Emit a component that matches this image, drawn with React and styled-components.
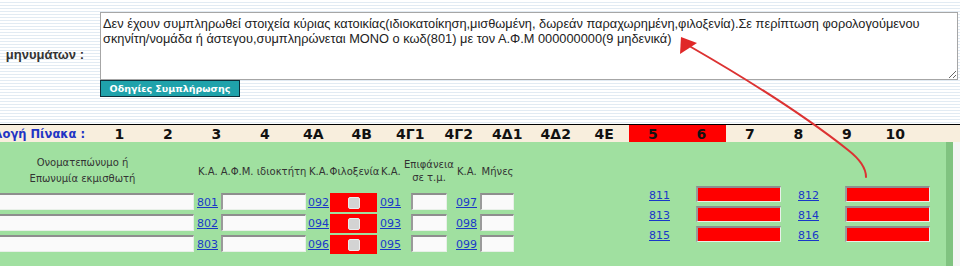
import React from 'react';
import styled, { createGlobalStyle } from 'styled-components';

const GlobalStyle = createGlobalStyle`
  html, body {
    margin: 0;
    padding: 0;
    overflow: hidden;
  }
  body {
    background: repeating-linear-gradient(
      to bottom,
      #ffffff 0px,
      #ffffff 2px,
      #e2ebf3 2px,
      #e2ebf3 3px
    );
    font-family: "Liberation Sans", Arial, sans-serif;
  }
`;

const Page = styled.div`
  position: relative;
  width: 960px;
  height: 266px;
  overflow: hidden;
`;

const MessageRow = styled.div`
  display: flex;
  align-items: center;
  padding-top: 12px;
`;

const FieldLabel = styled.div`
  width: 100px;
  box-sizing: border-box;
  padding-right: 16px;
  text-align: right;
  font: bold 13px "Liberation Sans", Arial, sans-serif;
  color: #333;
`;

const MessageBox = styled.div`
  display: flex;
  flex-direction: column;
  align-items: flex-start;
`;

const MessageArea = styled.textarea`
  width: 858px;
  height: 68px;
  box-sizing: border-box;
  margin: 0;
  padding: 3px 2px 2px;
  border: 1px solid #a6a6a6;
  background: #fff;
  color: #222;
  font: 12.8px/15px "Liberation Sans", Arial, sans-serif;
  resize: both;
  outline: none;
`;

const HelpButton = styled.button`
  width: 140px;
  height: 17px;
  margin: 0;
  padding: 0;
  box-sizing: border-box;
  background: #1fa2ab;
  border: 1px solid #0d2f3a;
  color: #fff;
  font: bold 9.5px "DejaVu Sans", Verdana, sans-serif;
  line-height: 14px;
  text-align: center;
`;

const TabBar = styled.div`
  display: grid;
  grid-template-columns: 95px repeat(17, 48.5px);
  height: 17px;
  margin-top: 27px;
  border-top: 1px solid #000;
  background: #f8eedd;
`;

const TabLabel = styled.div`
  display: flex;
  justify-content: flex-end;
  align-items: center;
  overflow: hidden;
  padding-right: 10px;

  span {
    flex-shrink: 0;
    white-space: nowrap;
    font: bold 11.5px "DejaVu Sans", Verdana, sans-serif;
    color: #1f34c4;
  }
`;

const Tab = styled.div`
  display: flex;
  justify-content: center;
  align-items: center;
  background: ${(p) => (p.$active ? '#ff0000' : 'transparent')};
  font: bold 14px "DejaVu Sans", Verdana, sans-serif;
  color: #111;
`;

const PanelWrap = styled.div`
  display: flex;
  background: #f5f5f5;
  height: 124px;
`;

const Panel = styled.div`
  display: flex;
  align-items: flex-start;
  width: 946px;
  border-right: 7px solid #80c380;
  background: #a0e0a0;
  padding-top: 7px;
  box-sizing: content-box;
`;

const LeaseGrid = styled.div`
  display: grid;
  grid-template-columns: 227px 24px 87px 23px 49px 24px 52px 25px 35px;
  grid-template-rows: 44px repeat(3, 21px);
  margin-left: -31px;
`;

const HeadCell = styled.div`
  display: flex;
  align-items: center;
  justify-content: ${(p) => (p.$left ? 'flex-start' : 'center')};
  padding-left: ${(p) => (p.$left ? '2px' : '0')};
  text-align: center;
  font: 10px/${(p) => p.$lh || 13}px "DejaVu Sans", Tahoma, sans-serif;
  color: #333;
  white-space: nowrap;
`;

const CodeLink = styled.a`
  align-self: center;
  justify-self: start;
  padding-left: 1px;
  margin-top: -2px;
  font: 11px "DejaVu Sans", Verdana, sans-serif;
  color: #1a38c8;
  text-decoration: underline;
  cursor: pointer;
`;

const Field = styled.input`
  box-sizing: border-box;
  width: ${(p) => p.$w}px;
  height: ${(p) => p.$h || 17}px;
  margin: 0 0 0 ${(p) => p.$ml || 0}px;
  padding: 0 2px;
  justify-self: start;
  border-top: 2px solid #8e8e8e;
  border-left: 2px solid #9a9a9a;
  border-bottom: 1px solid #e8f0e8;
  border-right: 1px solid #e8f0e8;
  background: ${(p) => (p.$alert ? '#ff0000' : '#fafafa')};
  font: 11px "Liberation Sans", Arial, sans-serif;
  outline: none;
`;

const FlagCell = styled.div`
  display: flex;
  justify-content: center;
  align-items: center;
  width: 47px;
  height: 19px;
  background: #ff0000;
  justify-self: start;
`;

const Flag = styled.input`
  appearance: none;
  width: 12px;
  height: 12px;
  margin: 0;
  border: 1px solid #ececec;
  border-radius: 2px;
  background: #d3d3d3;
`;

const ExtraGrid = styled.div`
  display: grid;
  grid-template-columns: 33px 86px 33px 86px;
  column-gap: 15px;
  grid-auto-rows: 20px;
  margin-left: auto;
  margin-right: 15px;
  margin-top: 37px;
  align-items: start;
`;

const Arrow = styled.svg`
  position: absolute;
  left: 0;
  top: 0;
  pointer-events: none;
`;

const tabs = ['1', '2', '3', '4', '4Α', '4Β', '4Γ1', '4Γ2', '4Δ1', '4Δ2', '4Ε', '5', '6', '7', '8', '9', '10'];
const redTabs = ['5', '6'];

const leaseRows = [
  ['801', '092', '091', '097'],
  ['802', '094', '093', '098'],
  ['803', '096', '095', '099'],
];

const extraRows = [
  ['811', '812'],
  ['813', '814'],
  ['815', '816'],
];

const message =
  'Δεν έχουν συμπληρωθεί στοιχεία κύριας κατοικίας(ιδιοκατοίκηση,μισθωμένη, δωρεάν παραχωρημένη,φιλοξενία).Σε περίπτωση φορολογούμενου\nσκηνίτη/νομάδα ή άστεγου,συμπληρώνεται ΜΟΝΟ ο κωδ(801) με τον Α.Φ.Μ 000000000(9 μηδενικά)';

export default function App() {
  return (
    <Page>
      <GlobalStyle />
      <MessageRow>
        <FieldLabel>μηνυμάτων :</FieldLabel>
        <MessageBox>
          <MessageArea defaultValue={message} readOnly />
          <HelpButton type="button">Οδηγίες Συμπλήρωσης</HelpButton>
        </MessageBox>
      </MessageRow>

      <TabBar>
        <TabLabel>
          <span>Επιλογή Πίνακα :</span>
        </TabLabel>
        {tabs.map((t) => (
          <Tab key={t} $active={redTabs.includes(t)}>
            {t}
          </Tab>
        ))}
      </TabBar>

      <PanelWrap>
        <Panel>
          <LeaseGrid>
            <HeadCell $lh={16}>
              Ονοματεπώνυμο ή
              <br />
              Επωνυμία εκμισθωτή
            </HeadCell>
            <HeadCell $left>Κ.Α.</HeadCell>
            <HeadCell>Α.Φ.Μ. ιδιοκτήτη</HeadCell>
            <HeadCell $left>Κ.Α.</HeadCell>
            <HeadCell>Φιλοξενία</HeadCell>
            <HeadCell $left>Κ.Α.</HeadCell>
            <HeadCell>
              Επιφάνεια
              <br />
              σε τ.μ.
            </HeadCell>
            <HeadCell $left>Κ.Α.</HeadCell>
            <HeadCell>Μήνες</HeadCell>

            {leaseRows.map(([ka, filox, epif, mines]) => (
              <React.Fragment key={ka}>
                <Field $w={225} />
                <CodeLink>{ka}</CodeLink>
                <Field $w={85} $ml={1} />
                <CodeLink>{filox}</CodeLink>
                <FlagCell>
                  <Flag type="checkbox" />
                </FlagCell>
                <CodeLink>{epif}</CodeLink>
                <Field $w={36} $ml={8} />
                <CodeLink>{mines}</CodeLink>
                <Field $w={34} />
              </React.Fragment>
            ))}
          </LeaseGrid>

          <ExtraGrid>
            {extraRows.map(([a, b]) => (
              <React.Fragment key={a}>
                <CodeLink>{a}</CodeLink>
                <Field $w={85} $h={16} $alert />
                <CodeLink>{b}</CodeLink>
                <Field $w={85} $h={16} $alert />
              </React.Fragment>
            ))}
          </ExtraGrid>
        </Panel>
      </PanelWrap>

      <Arrow width="960" height="266" viewBox="0 0 960 266">
        <path
          d="M 691 47 Q 790 104, 848 150 Q 866 164, 866 177"
          fill="none"
          stroke="#dc3232"
          strokeWidth="2"
          strokeLinecap="round"
        />
        <polygon points="681,37 680,54 697,43" fill="#e02828" />
      </Arrow>
    </Page>
  );
}
